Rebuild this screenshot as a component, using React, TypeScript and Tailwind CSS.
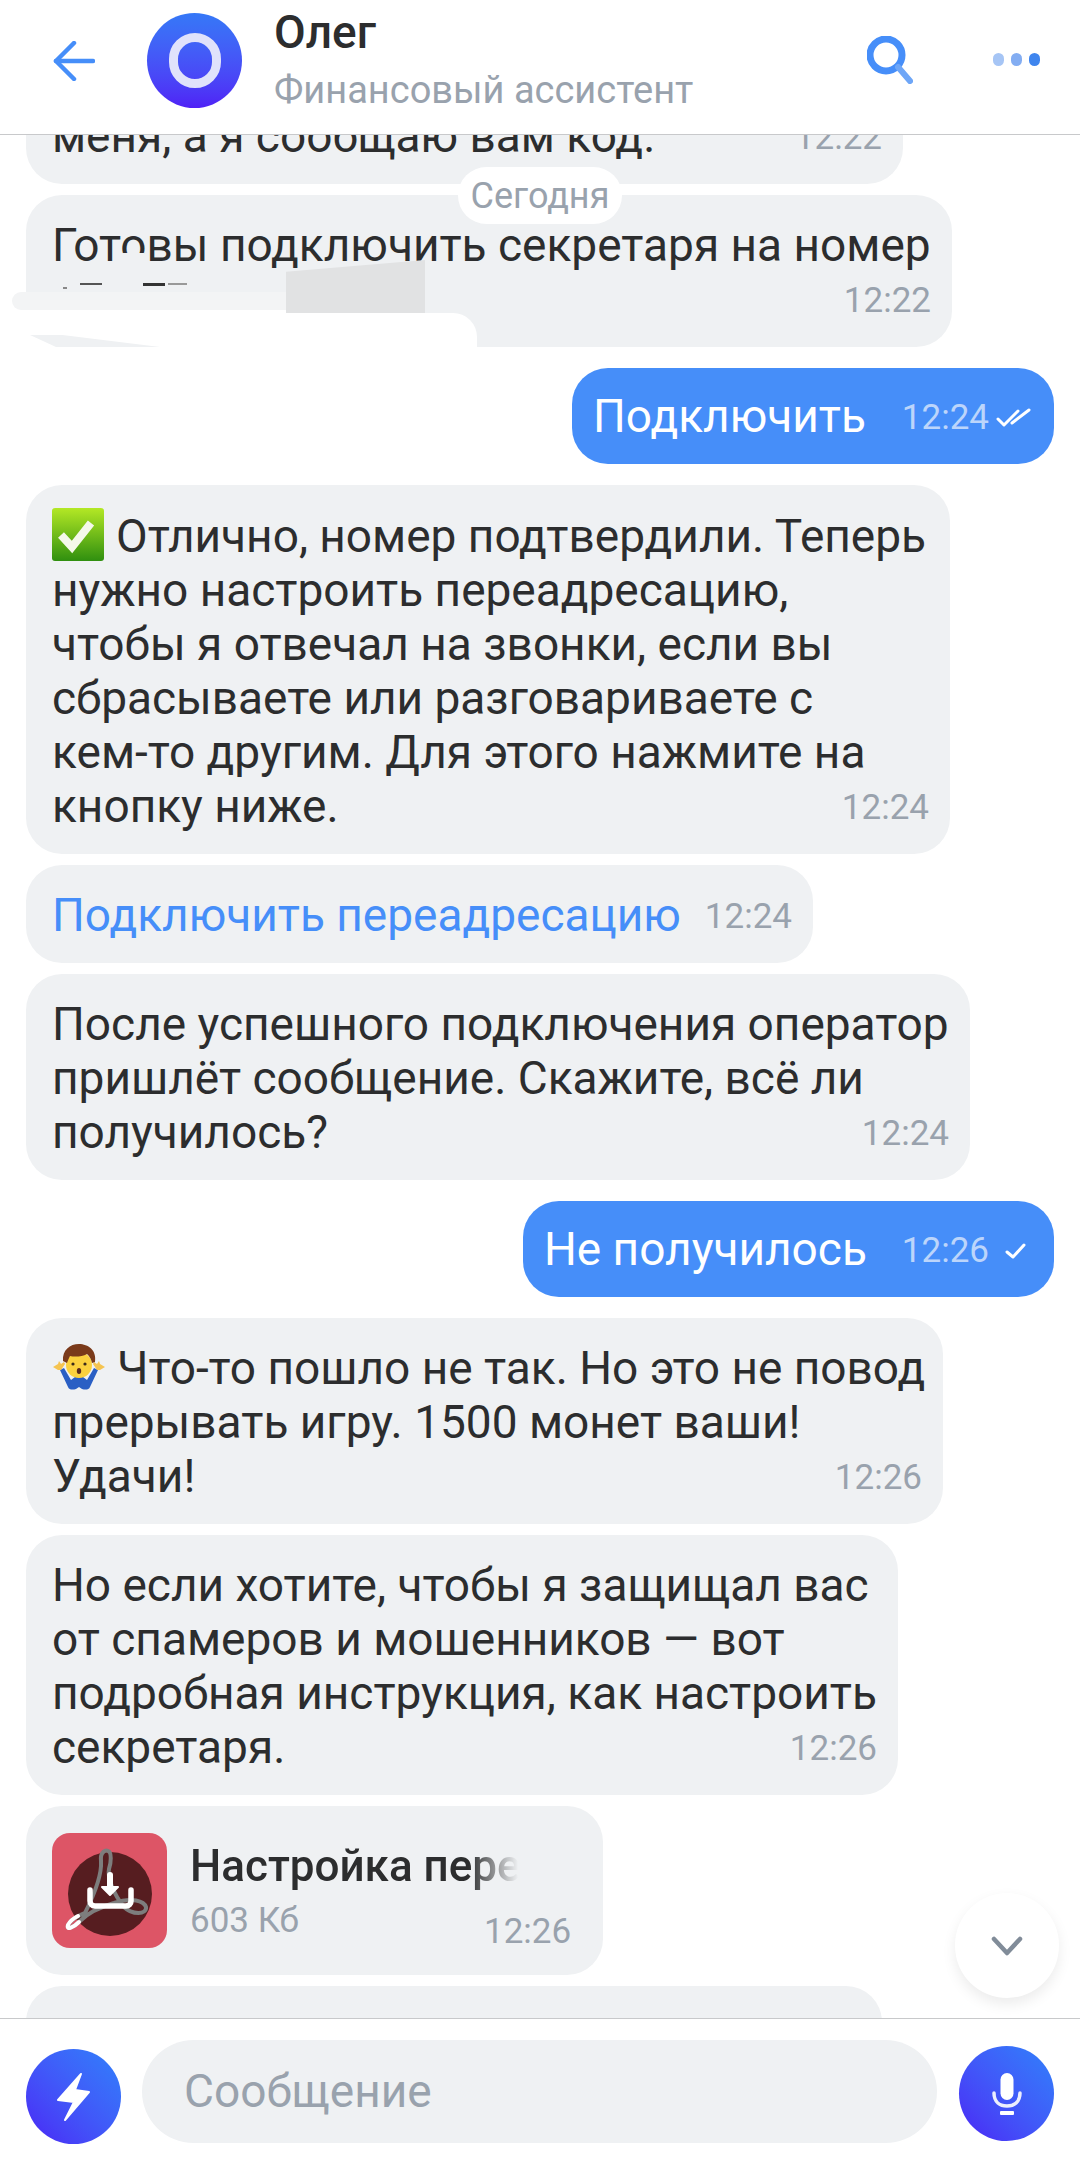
import { ReactNode } from 'react';

const CheckEmoji = () => (
    <svg viewBox="0 0 52 53" className="inline-block w-[52px] h-[53px] mr-[12px] align-[-9px]">
        <defs>
            <linearGradient id="check-bg" x1="0" y1="0" x2="0" y2="1">
                <stop offset="0" stopColor="#b4e825" />
                <stop offset="1" stopColor="#2f8f0f" />
            </linearGradient>
        </defs>
        <rect width="52" height="53" rx="3" fill="url(#check-bg)" />
        <path d="M9 27l11 12L39 15" fill="none" stroke="#f4f8ea" strokeWidth="8" />
    </svg>
);

const ShrugEmoji = () => (
    <svg viewBox="0 0 54 47" className="inline-block w-[54px] h-[47px] mr-[11px] align-[-7px]">
        <path d="M8 26l8 17c1 3 5 3 8 2l3-2 3 2c3 1 7 1 8-2l8-17-4-2-7 12-4-3H23l-4 3-7-12z" fill="#2a5fc4" />
        <path d="M1 23l5-3 1-3 2 3 3-2 1 2-4 6H6z" fill="#f5c451" />
        <path d="M53 23l-5-3-1-3-2 3-3-2-1 2 4 6h3z" fill="#f5c451" />
        <circle cx="27" cy="21" r="13" fill="#fbd13e" />
        <path d="M11 17C10 6 18 0 27 0s18 6 16 18l-3 1c-1-5-3-7-5-9-5 3-13 3-17 2-1 2-2 4-3 7z" fill="#7a3a1a" />
        <circle cx="21" cy="20" r="1.6" fill="#3a2a1a" />
        <circle cx="33" cy="20" r="1.6" fill="#3a2a1a" />
        <ellipse cx="27" cy="27" rx="2.2" ry="3" fill="#5a2a1a" />
    </svg>
);

type BubbleProps = {
    lines: ReactNode[];
    time: string;
    width: string;
};

const Bubble = ({ lines, time, width }: BubbleProps) => {
    const head = lines.slice(0, -1);
    const last = lines[lines.length - 1];

    return (
        <div className={`${width} pt-[23px] pb-[21px] bg-[#eff1f3] rounded-[36px] pl-[26px] pr-[21px] text-[46px] leading-[54px] text-[#2c2d2e]`}>
            {head.map((line, i) => (
                <div key={i} className="whitespace-nowrap">{line}</div>
            ))}
            <div className="flex justify-between items-end whitespace-nowrap h-[54px]">
                <span>{last}</span>
                <span className="text-[35px] leading-[50px] text-[#99a2ad]">{time}</span>
            </div>
        </div>
    );
};

const OutBubble = ({ text, time, width, double }: { text: string; time: string; width: string; double?: boolean }) => (
    <div className={`${width} self-end my-[10px] h-[96px] bg-[#468ef9] rounded-[36px] pl-[21px] pr-[22px] flex items-center justify-between text-[46px] text-white`}>
        <span>{text}</span>
        <span className="flex items-center gap-[7px] text-[35px] text-[#bcd5fb] mt-[4px]">
            {time}
            {double ? (
                <svg viewBox="0 0 36 20" className="w-[36px] h-[20px]" fill="none" stroke="#fff" strokeWidth="3" strokeLinecap="round" strokeLinejoin="round">
                    <path d="M2 11l6 6L22 3" />
                    <path d="M16 15L33 2" />
                </svg>
            ) : (
                <svg viewBox="0 0 36 20" className="w-[36px] h-[20px]" fill="none" stroke="#fff" strokeWidth="3" strokeLinecap="round" strokeLinejoin="round">
                    <path d="M11 11l6 5L28 4" />
                </svg>
            )}
        </span>
    </div>
);

const App = () => {
    return (
        <div className="relative flex flex-col w-[1080px] h-[2176px] overflow-hidden bg-white font-['Roboto',sans-serif]">
            <header className="flex items-start h-[135px] shrink-0 border-b border-[#c8c9cb] bg-white z-10">
                <svg viewBox="0 0 42 40" className="w-[42px] h-[40px] ml-[53px] mt-[41px]" fill="none" stroke="#468ef9" strokeWidth="4.5" strokeLinecap="round" strokeLinejoin="round">
                    <path d="M40 20H3" />
                    <path d="M21 2L3 20l18 18" />
                </svg>
                <div className="w-[95px] h-[95px] ml-[52px] mt-[13px] rounded-full bg-gradient-to-b from-[#3578f7] to-[#4f20f6] flex items-center justify-center">
                    <div className="w-[52px] h-[55px] rounded-full border-[9px] border-[#e0e2fb]" />
                </div>
                <div className="ml-[32px] flex flex-col">
                    <div className="text-[46px] leading-[54px] mt-[5px] font-medium text-[#2c2d2e]">Олег</div>
                    <div className="text-[38px] leading-[44px] mt-[9px] text-[#99a2ad]">Финансовый ассистент</div>
                </div>
                <svg viewBox="0 0 46 48" className="w-[46px] h-[48px] ml-auto mt-[36px]" fill="none" strokeLinecap="round">
                    <circle cx="19" cy="19" r="16" stroke="#468ef9" strokeWidth="7" />
                    <path d="M31 31l12 14" stroke="#6ea6f7" strokeWidth="6" />
                </svg>
                <div className="flex gap-[7px] ml-[80px] mr-[40px] mt-[53px]">
                    <div className="w-[11px] h-[13px] rounded-full bg-[#a6c5f5]" />
                    <div className="w-[11px] h-[13px] rounded-full bg-[#83adf2]" />
                    <div className="w-[11px] h-[13px] rounded-full bg-[#3f85ee]" />
                </div>
            </header>

            <main className="relative flex-1 overflow-hidden">
                <div className="flex flex-col gap-[11px] pl-[26px] pr-[26px] -mt-[49px]">
                    <Bubble width="w-[877px]" lines={['меня, а я сообщаю вам код.']} time="12:22" />
                    <Bubble width="w-[926px]" lines={['Готовы подключить секретаря на номер', '']} time="12:22" />
                    <OutBubble width="w-[482px]" text="Подключить" time="12:24" double />
                    <Bubble
                        width="w-[924px]"
                        lines={[
                            <><CheckEmoji />Отлично, номер подтвердили. Теперь</>,
                            'нужно настроить переадресацию,',
                            'чтобы я отвечал на звонки, если вы',
                            'сбрасываете или разговариваете с',
                            'кем-то другим. Для этого нажмите на',
                            'кнопку ниже.',
                        ]}
                        time="12:24"
                    />
                    <Bubble width="w-[787px]" lines={[<span className="text-[#468ef9]">Подключить переадресацию</span>]} time="12:24" />
                    <Bubble
                        width="w-[944px]"
                        lines={['После успешного подключения оператор', 'пришлёт сообщение. Скажите, всё ли', 'получилось?']}
                        time="12:24"
                    />
                    <OutBubble width="w-[531px]" text="Не получилось" time="12:26" />
                    <Bubble
                        width="w-[917px]"
                        lines={[
                            <><ShrugEmoji />Что-то пошло не так. Но это не повод</>,
                            'прерывать игру. 1500 монет ваши!',
                            'Удачи!',
                        ]}
                        time="12:26"
                    />
                    <Bubble
                        width="w-[872px]"
                        lines={[
                            'Но если хотите, чтобы я защищал вас',
                            'от спамеров и мошенников — вот',
                            'подробная инструкция, как настроить',
                            'секретаря.',
                        ]}
                        time="12:26"
                    />
                    <div className="w-[577px] h-[169px] bg-[#eff1f3] rounded-[36px] pl-[26px] pt-[27px] flex shrink-0">
                        <div className="w-[115px] h-[115px] rounded-[18px] bg-[#dd5566] shrink-0">
                            <svg viewBox="0 0 115 115" className="w-[115px] h-[115px]" fill="none" strokeLinecap="round" strokeLinejoin="round">
                                <circle cx="58" cy="61" r="42" fill="#561d20" />
                                <path d="M16 92C20 85 28 82 33 80C42 62 50 42 49 28C48 18 54 17 56 18C60 19 59 30 57 36C55 44 62 62 72 74C80 82 95 82 94 74C92 68 80 64 62 70C48 74 36 80 28 88C22 94 14 98 16 92" stroke="#7d7d7d" strokeWidth="4" />
                                <path d="M26 83C22 85 18 88 16 92C14 98 22 94 27 89" stroke="#fff" strokeWidth="4" />
                                <path d="M38 57v11c0 3 2 5 5 5h31c3 0 5-2 5-5V57" stroke="#fff" strokeWidth="5.5" />
                                <path d="M58 42v14" stroke="#fff" strokeWidth="6" />
                                <path d="M50 54h16l-8 8z" fill="#fff" stroke="#fff" strokeWidth="2" />
                            </svg>
                        </div>
                        <div className="relative ml-[23px] flex-1">
                            <div className="w-[328px] overflow-hidden whitespace-nowrap text-[44px] leading-[52px] mt-[7px] font-medium text-[#2c2d2e] [mask-image:linear-gradient(to_right,#000_85%,transparent)]">
                                Настройка переадресации
                            </div>
                            <div className="text-[35px] leading-[40px] mt-[9px] text-[#99a2ad]">603 Кб</div>
                            <div className="absolute left-[294px] top-[77px] text-[35px] leading-[44px] text-[#99a2ad]">12:26</div>
                        </div>
                    </div>
                    <div className="w-[856px] h-[120px] bg-[#eff1f3] rounded-[36px] shrink-0" />
                </div>

                {/* date pill sits over the bubbles */}
                <div className="absolute left-[458px] top-[32px] w-[164px] h-[57px] rounded-full bg-white flex items-center justify-center text-[36px] text-[#99a2ad]">
                    Сегодня
                </div>

                {/* redacted number */}
                <div className="absolute left-[121px] top-[118px] w-[23px] h-[13px] bg-[#eff1f3]" />
                <div className="absolute left-[286px] top-[125px] w-[139px] h-[53px] bg-[#e1e2e3] [clip-path:polygon(0_22%,100%_0,100%_100%,0_100%)]" />
                <div className="absolute left-[12px] top-[157px] w-[274px] h-[18px] bg-[#f3f4f5] rounded-l-[12px]" />
                <div className="absolute left-0 top-[175px] w-[286px] h-[37px] bg-white" />
                <div className="absolute left-[286px] top-[178px] w-[191px] h-[34px] bg-white rounded-tr-[24px]" />
                <div className="absolute left-[30px] top-[200px] w-[130px] h-[12px] bg-[#eff1f3] [clip-path:polygon(0_0,25%_0,100%_100%,20%_100%)]" />
                <div className="absolute left-[63px] top-[152px] w-[4px] h-[2px] bg-[#888]" />
                <div className="absolute left-[80px] top-[148px] w-[22px] h-[2px] bg-[#555]" />
                <div className="absolute left-[143px] top-[148px] w-[22px] h-[3px] bg-[#333]" />
                <div className="absolute left-[168px] top-[148px] w-[19px] h-[2px] bg-[#999]" />

                <div className="absolute left-[955px] top-[1758px] w-[104px] h-[105px] rounded-full bg-white shadow-[0_6px_14px_rgba(0,0,0,0.08)] flex items-center justify-center">
                    <svg viewBox="0 0 32 20" className="w-[32px] h-[20px]" fill="none" stroke="#818c99" strokeWidth="4.5" strokeLinecap="round" strokeLinejoin="round">
                        <path d="M3 3l13 14L29 3" />
                    </svg>
                </div>
            </main>

            <footer className="h-[158px] shrink-0 border-t border-[#c8c9cb] bg-white flex items-start pl-[26px] pt-[21px] z-10">
                <div className="w-[95px] h-[95px] mt-[9px] rounded-full bg-gradient-to-bl from-[#2f80fb] to-[#4a1ff5] flex items-center justify-center shrink-0">
                    <svg viewBox="-1 -1 35 50" className="w-[35px] h-[50px]">
                        <path d="M24 1L1 27l16 2-9 18 24-28-14-2z" fill="#fff" stroke="#fff" strokeWidth="2" strokeLinejoin="round" />
                    </svg>
                </div>
                <div className="w-[795px] h-[103px] ml-[21px] rounded-full bg-[#eff1f3] pl-[42px] flex items-center text-[46px] text-[#99a2ad] shrink-0">
                    Сообщение
                </div>
                <div className="w-[95px] h-[95px] ml-[22px] mt-[6px] rounded-full bg-gradient-to-bl from-[#2f80fb] to-[#4a1ff5] flex items-center justify-center shrink-0">
                    <svg viewBox="0 0 30 42" className="w-[30px] h-[42px]" fill="none">
                        <rect x="8.5" y="0" width="13" height="27" rx="6.5" fill="#fff" />
                        <path d="M2 20c0 9 6 13 13 13s13-4 13-13" stroke="#eceefd" strokeWidth="3.5" strokeLinecap="round" />
                        <rect x="8" y="38" width="14" height="4" rx="1" fill="#fff" />
                    </svg>
                </div>
            </footer>
        </div>
    );
};

export default App;
